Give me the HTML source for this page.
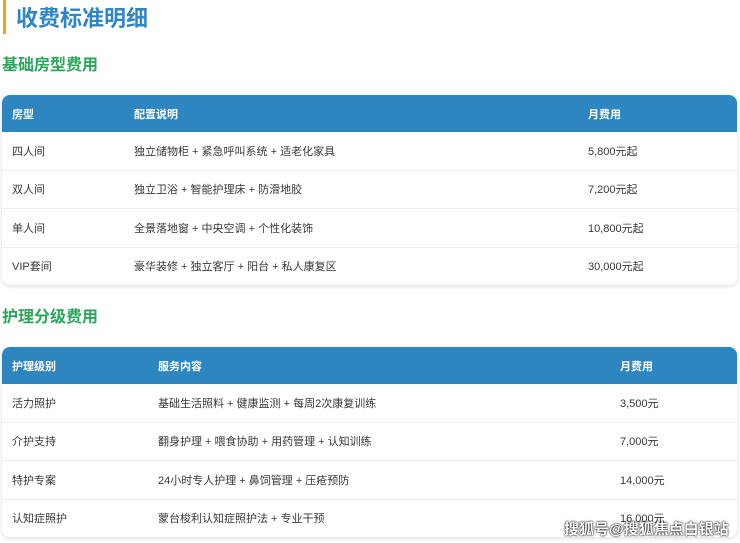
<!DOCTYPE html>
<html><head><meta charset="utf-8"><style>
body{margin:0;width:740px;height:543px;overflow:hidden;background:#fff;font-family:"Liberation Sans","Noto Sans CJK SC",sans-serif;position:relative}
.bar{position:absolute;left:3px;top:0;width:3px;height:34px;background:#f0a020}
.title{position:absolute;left:16px;top:4px;font-size:22px;font-weight:bold;color:#2f86c4;line-height:30px}
h2{position:absolute;left:2px;margin:0;font-size:16px;font-weight:bold;color:#2aa65a;line-height:20px}
.tbl{position:absolute;left:2px;width:735px;border-radius:8px;box-shadow:0 1px 5px rgba(0,0,0,.15);overflow:hidden;background:#fff}
.row{position:relative;height:37.5px;border-bottom:1px solid #eee;font-size:11px;color:#383838}
.row:last-child{border-bottom:none}
.hd{background:#2e86c1;color:#fff;font-weight:bold;height:37px;border-bottom:none}
.row span{position:absolute;top:50%;transform:translateY(-50%);white-space:nowrap}
.wm{position:absolute;left:564px;top:518px;font-size:15px;color:#fff;text-shadow:0 0 2px #000,0 0 1px #000;font-weight:bold}
</style></head><body>
<div class="bar"></div><div class="title">收费标准明细</div>
<h2 style="top:56px">基础房型费用</h2>
<div class="tbl" style="top:95px">
<div class="row hd"><span style="left:10px">房型</span><span style="left:132px">配置说明</span><span style="left:586px">月费用</span></div>
<div class="row"><span style="left:10px">四人间</span><span style="left:132px">独立储物柜 + 紧急呼叫系统 + 适老化家具</span><span style="left:586px">5,800元起</span></div>
<div class="row"><span style="left:10px">双人间</span><span style="left:132px">独立卫浴 + 智能护理床 + 防滑地胶</span><span style="left:586px">7,200元起</span></div>
<div class="row"><span style="left:10px">单人间</span><span style="left:132px">全景落地窗 + 中央空调 + 个性化装饰</span><span style="left:586px">10,800元起</span></div>
<div class="row"><span style="left:10px">VIP套间</span><span style="left:132px">豪华装修 + 独立客厅 + 阳台 + 私人康复区</span><span style="left:586px">30,000元起</span></div>
</div>
<h2 style="top:308px">护理分级费用</h2>
<div class="tbl" style="top:347px">
<div class="row hd"><span style="left:10px">护理级别</span><span style="left:156px">服务内容</span><span style="left:618px">月费用</span></div>
<div class="row"><span style="left:10px">活力照护</span><span style="left:156px">基础生活照料 + 健康监测 + 每周2次康复训练</span><span style="left:618px">3,500元</span></div>
<div class="row"><span style="left:10px">介护支持</span><span style="left:156px">翻身护理 + 喂食协助 + 用药管理 + 认知训练</span><span style="left:618px">7,000元</span></div>
<div class="row"><span style="left:10px">特护专案</span><span style="left:156px">24小时专人护理 + 鼻饲管理 + 压疮预防</span><span style="left:618px">14,000元</span></div>
<div class="row"><span style="left:10px">认知症照护</span><span style="left:156px">蒙台梭利认知症照护法 + 专业干预</span><span style="left:618px">16,000元</span></div>
</div>
<div class="wm">搜狐号@搜狐焦点白银站</div>
</body></html>
